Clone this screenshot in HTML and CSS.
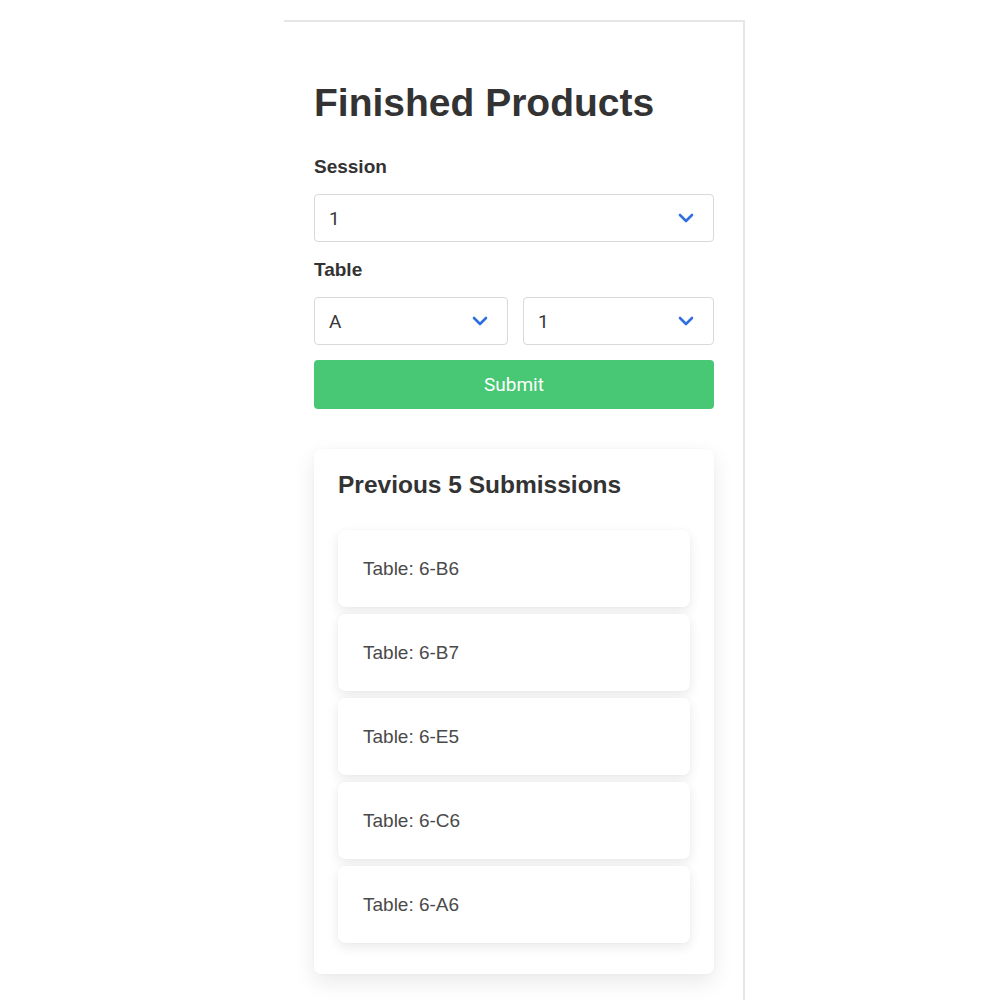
FILE: index.html
```html
<!DOCTYPE html>
<html lang="en">
<head>
<meta charset="utf-8">
<title>Finished Products</title>
<link rel="stylesheet" href="styles.css">
</head>
<body>
<main class="panel">
  <h1 class="title">Finished Products</h1>
  <form class="form">
    <label class="label">Session</label>
    <div class="select">
      <span class="value">1</span>
      <svg class="chev" width="16" height="10" viewBox="0 0 16 10"><polyline points="2,2 8,8 14,2" fill="none" stroke="#2f6fe0" stroke-width="2.6" stroke-linecap="round" stroke-linejoin="round"/></svg>
    </div>
    <label class="label label-table">Table</label>
    <div class="row">
      <div class="select">
        <span class="value">A</span>
        <svg class="chev" width="16" height="10" viewBox="0 0 16 10"><polyline points="2,2 8,8 14,2" fill="none" stroke="#2f6fe0" stroke-width="2.6" stroke-linecap="round" stroke-linejoin="round"/></svg>
      </div>
      <div class="select">
        <span class="value">1</span>
        <svg class="chev" width="16" height="10" viewBox="0 0 16 10"><polyline points="2,2 8,8 14,2" fill="none" stroke="#2f6fe0" stroke-width="2.6" stroke-linecap="round" stroke-linejoin="round"/></svg>
      </div>
    </div>
    <button type="button" class="submit">Submit</button>
  </form>
  <section class="card">
    <h2 class="card-title">Previous 5 Submissions</h2>
    <ul class="list">
      <li class="item">Table: 6-B6</li>
      <li class="item">Table: 6-B7</li>
      <li class="item">Table: 6-E5</li>
      <li class="item">Table: 6-C6</li>
      <li class="item">Table: 6-A6</li>
    </ul>
  </section>
</main>
</body>
</html>
```

FILE: styles.css
```css
html, body {
  margin: 0;
  padding: 0;
  background: #ffffff;
}
body {
  font-family: "Liberation Sans", Arial, sans-serif;
  color: #333333;
}
.panel {
  box-sizing: border-box;
  margin: 20px 0 0 284px;
  width: 461px;
  min-height: 980px;
  padding: 57px 29px 0 30px;
  border-top: 2px solid #e6e6e6;
  border-right: 2px solid #e6e6e6;
}
.title {
  margin: 0;
  font-size: 39px;
  line-height: 48px;
  font-weight: 700;
  color: #333333;
}
.form {
  display: flex;
  flex-direction: column;
  margin-top: 28px;
}
.label {
  font-size: 19px;
  line-height: 24px;
  font-weight: 700;
  color: #333333;
  margin-bottom: 15px;
}
.label-table {
  margin-top: 16px;
}
.select {
  height: 48px;
  box-sizing: border-box;
  border: 1px solid #d9d9d9;
  border-radius: 4px;
  display: flex;
  align-items: center;
  justify-content: space-between;
  padding: 0 19px 0 14px;
  background: #fff;
}
.value {
  font-family: Roboto, "Liberation Sans", sans-serif;
  font-size: 19px;
  color: #363636;
}
.chev {
  display: block;
}
.row {
  display: grid;
  grid-template-columns: 194px 191px;
  column-gap: 15px;
}
.submit {
  margin-top: 15px;
  height: 49px;
  border: none;
  border-radius: 4px;
  background: #48c774;
  color: #ffffff;
  font-family: Roboto, "Liberation Sans", sans-serif;
  font-size: 19px;
  padding: 0;
}
.card {
  margin-top: 40px;
  border-radius: 7px;
  background: #fff;
  box-shadow: 0 8px 22px rgba(0, 0, 0, 0.09), 0 0 3px rgba(0, 0, 0, 0.03);
  padding: 21px 24px 31px 24px;
}
.card-title {
  margin: 0;
  font-size: 24.5px;
  line-height: 30px;
  font-weight: 700;
  color: #333333;
}
.list {
  list-style: none;
  margin: 30px 0 0 0;
  padding: 0;
  display: flex;
  flex-direction: column;
  gap: 7px;
}
.item {
  height: 77px;
  box-sizing: border-box;
  display: flex;
  align-items: center;
  padding: 0 25px;
  border-radius: 7px;
  background: #fff;
  box-shadow: 0 4px 12px rgba(0, 0, 0, 0.09), 0 0 2px rgba(0, 0, 0, 0.04);
  font-size: 19px;
  color: #4a4a4a;
}
```
